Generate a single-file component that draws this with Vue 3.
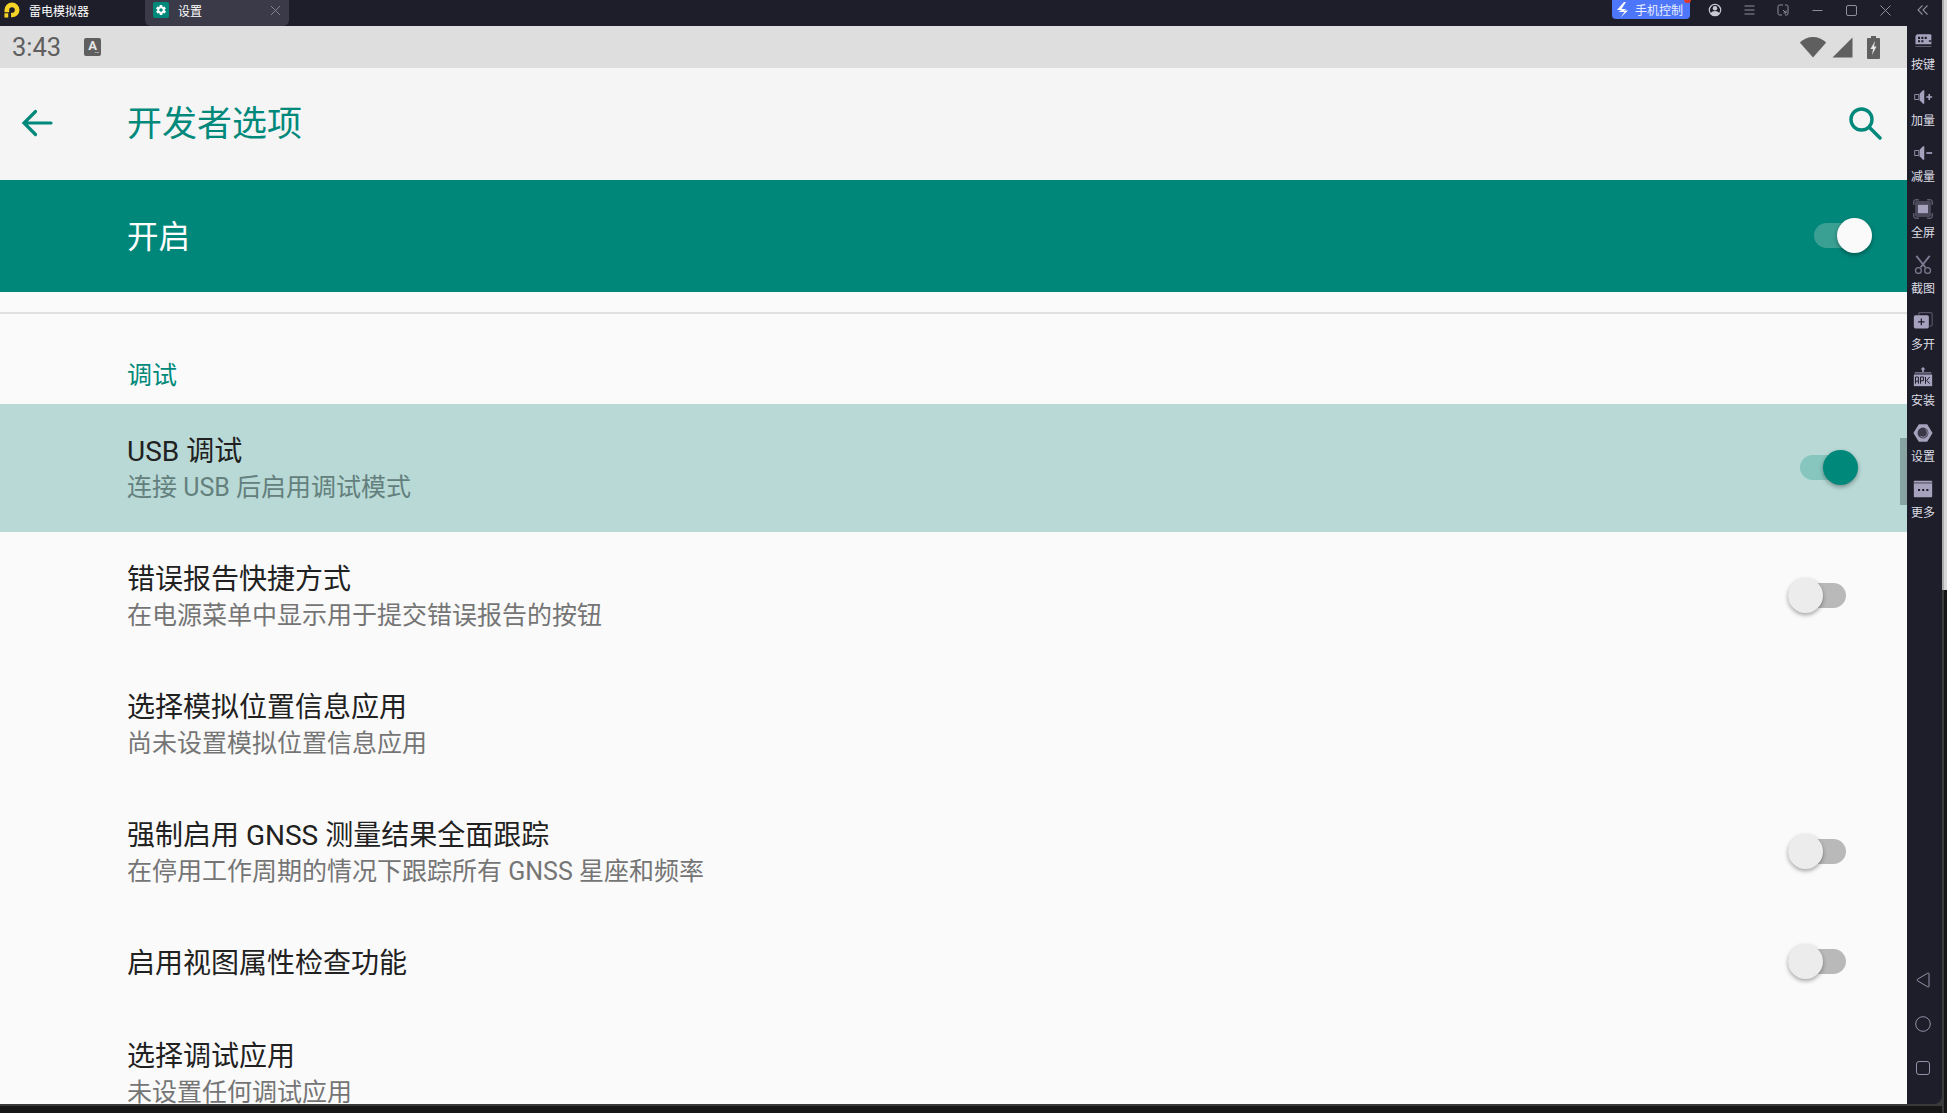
<script setup>
const sideButtons = [
  { label: '按键', icon: 'keys' },
  { label: '加量', icon: 'volUp' },
  { label: '减量', icon: 'volDown' },
  { label: '全屏', icon: 'full' },
  { label: '截图', icon: 'cut' },
  { label: '多开', icon: 'multi' },
  { label: '安装', icon: 'apk' },
  { label: '设置', icon: 'nut' },
  { label: '更多', icon: 'more' },
]

const rows = [
  { title: 'USB 调试', sub: '连接 USB 后启用调试模式', toggle: 'on', active: true },
  { title: '错误报告快捷方式', sub: '在电源菜单中显示用于提交错误报告的按钮', toggle: 'off' },
  { title: '选择模拟位置信息应用', sub: '尚未设置模拟位置信息应用' },
  { title: '强制启用 GNSS 测量结果全面跟踪', sub: '在停用工作周期的情况下跟踪所有 GNSS 星座和频率', toggle: 'off' },
  { title: '启用视图属性检查功能', toggle: 'off', short: true },
  { title: '选择调试应用', sub: '未设置任何调试应用' },
]
</script>

<template>
  <div class="shell">
    <div class="window">
      <header class="topbar">
        <div class="tab-home">
          <svg class="logo" width="16" height="16" viewBox="0 0 17 17">
            <path d="M8.500 0.500a8 8 0 0 1 8 8 8 8 0 0 1-8 7.800h-1v-4.800h1a3 3 0 1 0-3-3v2.500H0.500V8.500a8 8 0 0 1 8-8z" fill="#f5d327" />
            <rect x="0.500" y="12" width="4" height="4.500" fill="#f5d327" />
            <path d="M9.500 5.500L7.500 9h1.500l-1 2.500L10.500 8H9z" fill="#1e1e2a" />
          </svg>
          <span>雷电模拟器</span>
        </div>
        <div class="tab-active">
          <span class="tab-icon">
            <svg width="12" height="12" viewBox="0 0 24 24">
              <path d="M19.400 13c.1-.3.100-.7.100-1s0-.7-.1-1l2.100-1.600c.2-.1.200-.4.100-.6l-2-3.500c-.1-.2-.4-.3-.6-.2l-2.500 1c-.5-.4-1.100-.7-1.700-1l-.4-2.600c0-.3-.2-.5-.5-.5h-4c-.3 0-.5.200-.5.500l-.4 2.600c-.6.300-1.200.6-1.700 1l-2.500-1c-.2-.1-.5 0-.6.200l-2 3.500c-.1.200-.1.500.1.600L4.600 11c-.1.300-.1.700-.1 1s0 .7.100 1l-2.100 1.600c-.2.100-.2.400-.1.600l2 3.500c.1.200.4.300.6.200l2.500-1c.5.400 1.100.7 1.700 1l.4 2.600c0 .3.200.5.500.5h4c.3 0 .5-.2.500-.5l.4-2.600c.6-.3 1.200-.6 1.700-1l2.500 1c.2.100.5 0 .6-.2l2-3.500c.1-.2.100-.5-.1-.6zM12 15.500a3.500 3.500 0 1 1 0-7 3.500 3.500 0 0 1 0 7z" fill="#fff" />
            </svg>
          </span>
          <span class="tab-name">设置</span>
          <svg class="tab-close" width="11" height="11" viewBox="0 0 11 11">
            <path d="M1 1l9 9M10 1l-9 9" stroke="#85858f" stroke-width="1" fill="none" />
          </svg>
        </div>
        <div class="top-right">
          <div class="phone-btn">
            <svg width="13" height="16" viewBox="0 0 13 16">
              <path d="M8 0L1 8h4.500L2.500 10l6 .1-4 5.400 7.500-7H7.500l3-1.500H5.500L10 0z" fill="#fff" />
            </svg>
            <span>手机控制</span>
            <i class="red-dot"></i>
          </div>
          <span class="win">
            <svg width="14" height="14" viewBox="0 0 14 14">
              <circle cx="7" cy="7" r="5.700" fill="none" stroke="#c9c9d4" stroke-width="1.200" />
              <circle cx="7" cy="5.300" r="2.200" fill="#c9c9d4" />
              <path d="M2.600 10.500c1-2 2.600-2.600 4.400-2.600s3.400.6 4.400 2.600a6 6 0 0 1-8.800 0z" fill="#c9c9d4" />
            </svg>
          </span>
          <span class="win">
            <svg width="12" height="10" viewBox="0 0 12 10">
              <path d="M1.500 1h10M1.500 5h10M1.500 9h10" stroke="#8e8e9c" stroke-width="1" fill="none" />
            </svg>
          </span>
          <span class="win">
            <svg width="12" height="12" viewBox="0 0 12 12">
              <path d="M6 1H2.500A1.500 1.500 0 0 0 1 2.500v7A1.500 1.500 0 0 0 2.500 11H5M8 11h1.500A1.500 1.500 0 0 0 11 9.500V2.500A1.500 1.500 0 0 0 9.500 1H8M6 6l3 3M9 6.500V9H6.500" stroke="#8e8e9c" stroke-width="1" fill="none" />
            </svg>
          </span>
          <span class="win">
            <svg width="11" height="11" viewBox="0 0 11 11">
              <path d="M0.500 5.500h10" stroke="#8e8e9c" stroke-width="1" fill="none" />
            </svg>
          </span>
          <span class="win">
            <svg width="11" height="11" viewBox="0 0 11 11">
              <rect x="0.500" y="0.500" width="10" height="10" rx="1.500" stroke="#8e8e9c" stroke-width="1" fill="none" />
            </svg>
          </span>
          <span class="win">
            <svg width="11" height="11" viewBox="0 0 11 11">
              <path d="M0.500 0.500l10 10M10.500 0.500l-10 10" stroke="#8e8e9c" stroke-width="1" fill="none" />
            </svg>
          </span>
          <span class="win win-last">
            <svg width="12" height="10" viewBox="0 0 12 10">
              <path d="M5.500 0.500L1 5l4.500 4.500M10.500 0.500L6 5l4.500 4.500" stroke="#8e8e9c" stroke-width="1.100" fill="none" />
            </svg>
          </span>
        </div>
      </header>

      <div class="middle">
        <main class="screen">
          <div class="statusbar">
            <span class="clock">3:43</span>
            <span class="a-icon">A<i>•••</i></span>
            <div class="status-right">
              <svg width="28" height="22" viewBox="0 0 28 22">
                <path d="M14 21.500L0.800 6.500C4.500 3 9 1 14 1s9.500 2 13.200 5.500z" fill="#5f5f5f" />
              </svg>
              <svg width="21" height="21" viewBox="0 0 21 21">
                <path d="M20.500 0.500v20H0.500z" fill="#5f5f5f" />
              </svg>
              <svg class="battery" width="13" height="23" viewBox="0 0 13 23">
                <path d="M4 0h5v2h3a1 1 0 0 1 1 1v19a1 1 0 0 1-1 1H1a1 1 0 0 1-1-1V3a1 1 0 0 1 1-1h3z" fill="#5f5f5f" />
                <path d="M8 5L3.500 13H6l-1 6 4.500-8.500H7z" fill="#e6e6e6" />
              </svg>
            </div>
          </div>

          <div class="appbar">
            <svg class="back" width="32" height="28" viewBox="0 0 32 28">
              <path d="M30 14H3M14.500 2.500L3 14l11.500 11.500" stroke="#00897b" stroke-width="3.200" fill="none" stroke-linecap="round" />
            </svg>
            <h1>开发者选项</h1>
            <svg class="search" width="34" height="34" viewBox="0 0 34 34">
              <circle cx="13.500" cy="13.500" r="10.500" stroke="#00897b" stroke-width="3.400" fill="none" />
              <path d="M21.500 21.500L32 32" stroke="#00897b" stroke-width="3.400" stroke-linecap="round" fill="none" />
            </svg>
          </div>

          <div class="master">
            <span class="master-label">开启</span>
            <span class="switch switch-master"><i></i></span>
          </div>

          <div class="gap"></div>

          <div class="category">调试</div>

          <div class="list">
            <div
              v-for="row in rows"
              :key="row.title"
              class="row"
              :class="{ active: row.active, short: row.short }"
            >
              <div class="title">{{ row.title }}</div>
              <div v-if="row.sub" class="sub">{{ row.sub }}</div>
              <span v-if="row.toggle" class="switch" :class="'switch-' + row.toggle"><i></i></span>
            </div>
          </div>

          <div class="scrollbar"></div>
        </main>

        <aside class="side">
          <div class="side-top">
            <div v-for="btn in sideButtons" :key="btn.label" class="side-btn">
              <svg width="20" height="20" viewBox="0 0 24 24">
                <template v-if="btn.icon === 'keys'">
                  <path d="M5 4h16l1 1v11H3V6z" fill="#a6a2bd" />
                  <path d="M6 7h2.500v2.500H6zM10 7h2.500v2.500H10zM14 7h2.500v2.500H14zM6 11h2.500v2.500H6zM10 11h2.500v2.500H10zM19 11h3v2h-3z" fill="#1e1e2a" />
                  <rect x="3" y="18" width="19" height="1" fill="#6d6a80" />
                </template>
                <template v-else-if="btn.icon === 'volUp'">
                  <path d="M2 9h5v6H2z" fill="none" stroke="#a6a2bd" stroke-width="1" />
                  <path d="M8 8l4-4h1.500v16H12l-4-4z" fill="#a6a2bd" />
                  <path d="M16 12h7M19.500 8.500v7" stroke="#a6a2bd" stroke-width="2" />
                </template>
                <template v-else-if="btn.icon === 'volDown'">
                  <path d="M2 9h5v6H2z" fill="none" stroke="#a6a2bd" stroke-width="1" />
                  <path d="M8 8l4-4h1.500v16H12l-4-4z" fill="#a6a2bd" />
                  <path d="M16 12h7" stroke="#a6a2bd" stroke-width="2" />
                </template>
                <template v-else-if="btn.icon === 'full'">
                  <path d="M1 7V3a2 2 0 0 1 2-2h4M17 1h4a2 2 0 0 1 2 2v4M23 17v4a2 2 0 0 1-2 2h-4M7 23H3a2 2 0 0 1-2-2v-4" stroke="#7d7a92" stroke-width="1.200" fill="none" />
                  <rect x="2.500" y="2.500" width="19" height="19" rx="2" fill="#4a4859" />
                  <rect x="6" y="7" width="12" height="10" fill="#a6a2bd" />
                </template>
                <template v-else-if="btn.icon === 'cut'">
                  <path d="M20 1L9 15M4 1l11 14" stroke="#7d7a92" stroke-width="2.200" fill="none" />
                  <circle cx="6.500" cy="18.500" r="3.500" stroke="#7d7a92" stroke-width="1.500" fill="none" />
                  <circle cx="17.500" cy="18.500" r="3.500" stroke="#7d7a92" stroke-width="1.500" fill="none" />
                </template>
                <template v-else-if="btn.icon === 'multi'">
                  <path d="M7 5V2h15a1 1 0 0 1 1 1v14a1 1 0 0 1-1 1h-2" stroke="#6d6a80" stroke-width="1" fill="none" />
                  <rect x="1" y="5" width="18" height="16" rx="2" fill="#a6a2bd" />
                  <path d="M6 13h8M10 9v8" stroke="#1e1e2a" stroke-width="1.500" />
                </template>
                <template v-else-if="btn.icon === 'apk'">
                  <path d="M12 0l3 3h-2v3h-2V3H9z" fill="#a6a2bd" />
                  <rect x="2" y="6" width="20" height="2" fill="#6d6a80" />
                  <rect x="1" y="9" width="22" height="14" fill="#a6a2bd" />
                  <path d="M3 20v-8h3.500v8M3 17h3.500M9 20v-8h3.500v4.500H9M15 12v8M20 12l-3.500 4 3.500 4" stroke="#1e1e2a" stroke-width="1.200" fill="none" />
                </template>
                <template v-else-if="btn.icon === 'nut'">
                  <path d="M7 1.500h10L23.500 12 17 22.500H7L.5 12z" fill="#a6a2bd" />
                  <circle cx="12" cy="12" r="6.500" fill="#3a3848" />
                  <path d="M15 7.500A5 5 0 1 1 9 16" fill="none" stroke="#a6a2bd" stroke-width="1" />
                </template>
                <template v-else>
                  <path d="M2 2h20a1 1 0 0 1 1 1v18a1 1 0 0 1-1 1H2a1 1 0 0 1-1-1V3a1 1 0 0 1 1-1z" fill="#a6a2bd" />
                  <rect x="1" y="4" width="22" height="1.500" fill="#5c5a6e" />
                  <path d="M6 12h2.500v2.500H6zM11 12h2.500v2.500H11zM16 12h2.500v2.500H16z" fill="#1e1e2a" />
                </template>
              </svg>
              <span>{{ btn.label }}</span>
            </div>
          </div>
          <div class="side-nav">
            <svg width="16" height="16" viewBox="0 0 16 16">
              <path d="M14 1.700v12.600a.8.8 0 0 1-1.200.6L2.500 8.800a1 1 0 0 1 0-1.600L12.800 1.100a.8.8 0 0 1 1.200.6z" stroke="#9391a8" stroke-width="1" fill="none" />
            </svg>
            <svg width="16" height="16" viewBox="0 0 16 16">
              <circle cx="8" cy="8" r="7.300" stroke="#9391a8" stroke-width="1" fill="none" />
            </svg>
            <svg width="16" height="16" viewBox="0 0 16 16">
              <rect x="1.500" y="1.500" width="13" height="13" rx="2.500" stroke="#9391a8" stroke-width="1" fill="none" />
            </svg>
          </div>
        </aside>
      </div>
      <div class="bottom-edge"></div>
    </div>

    <div class="edge">
      <div class="edge-light"></div>
      <div class="edge-dark"></div>
    </div>
  </div>
</template>

<style scoped>
.shell {
  width: 1947px;
  height: 1113px;
  display: flex;
  overflow: hidden;
  background: #161616;
  font-family: Roboto, "Noto Sans CJK SC", sans-serif;
}

.window {
  width: 1942px;
  flex: none;
  display: flex;
  flex-direction: column;
}

.topbar {
  height: 26px;
  flex: none;
  display: flex;
  background: #1e1e2a;
  color: #fff;
}

.tab-home {
  width: 145px;
  box-sizing: border-box;
  padding-bottom: 6px;
  display: flex;
  align-items: center;
  font-size: 12px;
  font-family: "Noto Sans CJK SC", sans-serif;
}

.logo {
  margin-left: 4px;
  margin-right: 9px;
}

.tab-active {
  width: 144px;
  box-sizing: border-box;
  padding-bottom: 6px;
  display: flex;
  align-items: center;
  background: #3a3a48;
  border-radius: 0 0 6px 6px;
  font-size: 12px;
  font-family: "Noto Sans CJK SC", sans-serif;
}

.tab-icon {
  width: 16px;
  height: 16px;
  margin-left: 8px;
  display: flex;
  align-items: center;
  justify-content: center;
  background: #00897b;
  border-radius: 2px;
}

.tab-name {
  margin-left: 9px;
}

.tab-close {
  margin-left: auto;
  margin-right: 8px;
}

.top-right {
  margin-left: auto;
  display: flex;
  align-items: flex-start;
  padding-right: 2px;
}

.phone-btn {
  position: relative;
  width: 78px;
  height: 19px;
  display: flex;
  align-items: center;
  margin-right: 8px;
  padding-left: 4px;
  box-sizing: border-box;
  gap: 6px;
  background: #4d76fb;
  border-radius: 0 0 4px 4px;
  font-size: 12px;
  font-family: "Noto Sans CJK SC", sans-serif;
  color: #e8edff;
}

.red-dot {
  position: absolute;
  top: -3px;
  right: -1px;
  width: 7px;
  height: 6px;
  border-radius: 50%;
  background: #e0392f;
}

.win {
  width: 34px;
  height: 20px;
  display: flex;
  align-items: center;
  justify-content: center;
}

.win-last {
  margin-left: 4px;
}

.middle {
  flex: 1;
  min-height: 0;
  display: flex;
  background: #3a3a3a;
}

.screen {
  position: relative;
  width: 1907px;
  flex: none;
  display: flex;
  flex-direction: column;
  overflow: hidden;
  background: #fafafa;
}

.statusbar {
  height: 42px;
  flex: none;
  display: flex;
  align-items: center;
  padding: 0 27px 0 12px;
  background: #dedede;
  color: #5f5f5f;
}

.clock {
  font-size: 25.500px;
  width: 72px;
}

.a-icon {
  position: relative;
  width: 17px;
  height: 18px;
  display: flex;
  justify-content: center;
  background: #5f5f5f;
  border-radius: 2px;
  color: #e6e6e6;
  font-size: 13px;
  font-weight: 700;
  line-height: 15px;
}

.a-icon i {
  position: absolute;
  right: 2px;
  bottom: 1px;
  font-size: 4px;
  line-height: 4px;
  font-style: normal;
}

.status-right {
  margin-left: auto;
  display: flex;
  align-items: center;
  gap: 5px;
}

.battery {
  margin-left: 9px;
}

.appbar {
  height: 112px;
  flex: none;
  display: flex;
  align-items: center;
  background: #f5f5f5;
}

.back {
  margin-left: 21px;
  margin-bottom: 2px;
  flex: none;
}

.appbar h1 {
  margin: 0 0 0 74px;
  padding-bottom: 7px;
  font-size: 35px;
  font-weight: 400;
  color: #00897b;
  font-family: "Noto Sans CJK SC", sans-serif;
}

.search {
  margin-left: auto;
  margin-right: 25px;
  margin-bottom: 2px;
}

.master {
  position: relative;
  height: 112px;
  flex: none;
  display: flex;
  align-items: center;
  padding-left: 127px;
  background: #00877a;
  color: #fff;
  font-size: 31.500px;
  font-family: "Noto Sans CJK SC", sans-serif;
}

.master-label {
  padding-bottom: 5px;
}

.gap {
  height: 20px;
  flex: none;
  border-bottom: 2px solid #e0e0e0;
}

.category {
  height: 90px;
  flex: none;
  box-sizing: border-box;
  padding: 41px 0 0 127px;
  font-size: 25px;
  line-height: 36px;
  color: #00897b;
  font-family: "Noto Sans CJK SC", sans-serif;
}

.list {
  flex: 1;
}

.row {
  position: relative;
  height: 128px;
  box-sizing: border-box;
  padding: 29px 0 0 127px;
}

.row.short {
  height: 93px;
}

.row.active {
  background: #b8d9d6;
}

.title {
  font-size: 28px;
  line-height: 38px;
  color: #212121;
}

.sub {
  font-size: 25px;
  line-height: 34px;
  color: #757575;
}

.active .sub {
  color: #64807d;
}

.switch {
  position: absolute;
  top: 50%;
  width: 58px;
  height: 25px;
  margin-top: -13.500px;
  border-radius: 13px;
}

.switch i {
  position: absolute;
  top: -5px;
  width: 35px;
  height: 35px;
  border-radius: 50%;
  box-shadow: 0 2px 4px rgba(0, 0, 0, 0.35);
}

.switch-off {
  left: 1788px;
  background: #b9b9b9;
}

.switch-off i {
  left: 0;
  background: #ececec;
}

.switch-on {
  left: 1800px;
  background: #87c6bf;
}

.switch-on i {
  right: 0;
  background: #00897b;
}

.switch-master {
  left: 1814px;
  background: #3aa093;
}

.switch-master i {
  right: 0;
  background: #fafafa;
}

.scrollbar {
  position: absolute;
  right: 0;
  top: 412px;
  width: 7px;
  height: 67px;
  background: #89a3a0;
}

.side {
  width: 35px;
  flex: none;
  box-sizing: border-box;
  padding-right: 3px;
  display: flex;
  flex-direction: column;
  align-items: center;
  justify-content: space-between;
  background: #1e1e2a;
  border-bottom-right-radius: 8px;
}

.side-top {
  display: flex;
  flex-direction: column;
  padding-top: 5px;
}

.side-btn {
  height: 56px;
  display: flex;
  flex-direction: column;
  align-items: center;
  color: #dcdce4;
  font-size: 12px;
  line-height: 16px;
  font-family: "Noto Sans CJK SC", sans-serif;
}

.side-btn svg {
  flex: none;
  margin-bottom: 5px;
}

.side-nav {
  display: flex;
  flex-direction: column;
  align-items: center;
  gap: 28px;
  padding-bottom: 28px;
}

.bottom-edge {
  height: 9px;
  flex: none;
  box-sizing: border-box;
  background: #161616;
  border-top: 2px solid #3a3a3a;
}

.edge {
  flex: 1;
  display: flex;
  flex-direction: column;
}

.edge-light {
  height: 590px;
  flex: none;
  box-sizing: border-box;
  background: #d6d6d6;
  border-left: 2px solid #adadad;
}

.edge-dark {
  flex: 1;
  box-sizing: border-box;
  background: #161616;
  border-left: 2px solid #3a3a3a;
}
</style>

<style>
html,
body {
  margin: 0;
  background: #161616;
}
</style>
